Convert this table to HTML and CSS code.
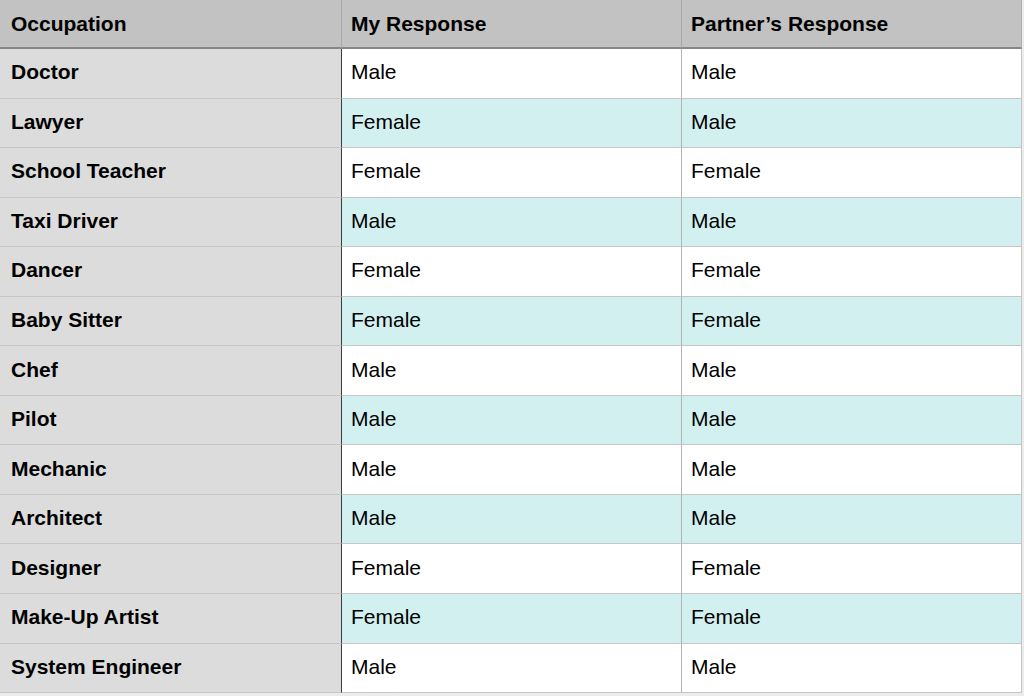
FILE: index.html
```html
<!DOCTYPE html>
<html>
<head>
<meta charset="utf-8">
<link rel="stylesheet" href="styles.css">
</head>
<body>
<div class="table">
  <div class="cell head first">Occupation</div>
  <div class="cell head">My Response</div>
  <div class="cell head last">Partner’s Response</div>

  <div class="cell label">Doctor</div><div class="cell">Male</div><div class="cell last">Male</div>
  <div class="cell label">Lawyer</div><div class="cell alt">Female</div><div class="cell alt last">Male</div>
  <div class="cell label">School Teacher</div><div class="cell">Female</div><div class="cell last">Female</div>
  <div class="cell label">Taxi Driver</div><div class="cell alt">Male</div><div class="cell alt last">Male</div>
  <div class="cell label">Dancer</div><div class="cell">Female</div><div class="cell last">Female</div>
  <div class="cell label">Baby Sitter</div><div class="cell alt">Female</div><div class="cell alt last">Female</div>
  <div class="cell label">Chef</div><div class="cell">Male</div><div class="cell last">Male</div>
  <div class="cell label">Pilot</div><div class="cell alt">Male</div><div class="cell alt last">Male</div>
  <div class="cell label">Mechanic</div><div class="cell">Male</div><div class="cell last">Male</div>
  <div class="cell label">Architect</div><div class="cell alt">Male</div><div class="cell alt last">Male</div>
  <div class="cell label">Designer</div><div class="cell">Female</div><div class="cell last">Female</div>
  <div class="cell label">Make-Up Artist</div><div class="cell alt">Female</div><div class="cell alt last">Female</div>
  <div class="cell label">System Engineer</div><div class="cell">Male</div><div class="cell last">Male</div>
</div>
</body>
</html>
```
FILE: styles.css
```css
html, body {
  margin: 0;
  padding: 0;
  background: #ececec;
}
body {
  font-family: "Liberation Sans", Arial, sans-serif;
  font-size: 21px;
  color: #000;
}
.table {
  display: grid;
  grid-template-columns: 342px 340px 340px;
  grid-template-rows: 49px repeat(13, 49.55px);
  width: 1022px;
}
.cell {
  box-sizing: border-box;
  display: flex;
  align-items: center;
  padding: 0 0 2px 9px;
  background: #ffffff;
  border-right: 1px solid #b4b4b4;
  border-bottom: 1px solid #c6c6c6;
}
.cell.alt {
  background: #d3f0f0;
}
.cell.last {
  border-right: 1px solid #c4c4c4;
}
.cell.label {
  background: #dcdcdc;
  font-weight: bold;
  padding-left: 11px;
  border-right: 1px solid #3c3c3c;
}
.cell.head {
  background: #c1c2c1;
  font-weight: bold;
  border-right: 1px solid #a6a7a6;
  border-bottom: 2px solid #878787;
  padding-bottom: 0;
}
.cell.head.first {
  padding-left: 11px;
}
.cell.head.last {
  border-right: 1px solid #b0b0b0;
}
```
